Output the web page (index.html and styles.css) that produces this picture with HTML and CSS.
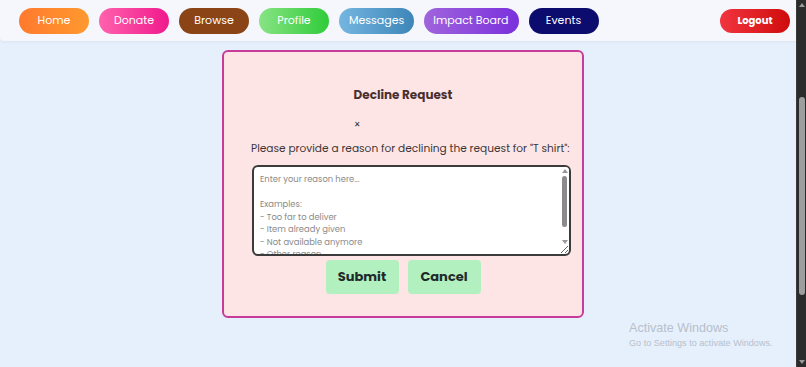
FILE: index.html
```html
<!DOCTYPE html>
<html lang="en">
<head>
<meta charset="utf-8">
<title>Decline Request</title>
<link rel="stylesheet" href="styles.css">
</head>
<body>
<div class="screen">
  <div class="page">
    <nav class="navbar">
      <div class="nav-links">
        <a class="nav-btn home">Home</a>
        <a class="nav-btn donate">Donate</a>
        <a class="nav-btn browse">Browse</a>
        <a class="nav-btn profile">Profile</a>
        <a class="nav-btn messages">Messages</a>
        <a class="nav-btn impact">Impact Board</a>
        <a class="nav-btn events">Events</a>
      </div>
      <a class="logout-btn">Logout</a>
    </nav>
    <main class="content">
      <section class="modal">
        <h3 class="modal-title">Decline Request</h3>
        <div class="close-row"><span class="close-btn">×</span></div>
        <p class="modal-text">Please provide a reason for declining the request for "T shirt":</p>
        <div class="reason-wrap">
          <textarea class="reason">Enter your reason here...

Examples:
- Too far to deliver
- Item already given
- Not available anymore
- Other reason</textarea>
          <div class="ta-scroll" aria-hidden="true">
            <span class="ta-arrow ta-up"></span>
            <div class="ta-track"><div class="ta-thumb"></div></div>
            <span class="ta-arrow ta-down"></span>
          </div>
        </div>
        <div class="actions">
          <button class="act-btn">Submit</button>
          <button class="act-btn">Cancel</button>
        </div>
      </section>
    </main>
    <div class="watermark">
      <div class="wm-title">Activate Windows</div>
      <div class="wm-sub">Go to Settings to activate Windows.</div>
    </div>
  </div>
  <div class="scrollbar">
    <span class="arrow up"></span>
    <div class="track"><div class="thumb"></div></div>
    <span class="arrow down"></span>
  </div>
</div>
</body>
</html>
```
FILE: styles.css
```css
* { box-sizing: border-box; }
html, body { margin: 0; padding: 0; height: 100%; overflow: hidden; }
body {
  font-family: "Poppins", "Inter", "Noto Sans", sans-serif;
  background: #e6f0fd;
}
.screen { display: flex; height: 367px; }
.page { flex: 1; position: relative; display: flex; flex-direction: column; }

.navbar {
  height: 41px;
  background: #f5f7fc;
  border-bottom-left-radius: 4px;
  box-shadow: 0 1px 3px rgba(0,0,0,0.05);
  display: flex;
  align-items: center;
  justify-content: space-between;
  padding: 0 6px 0 19px;
}
.nav-links { display: flex; gap: 10px; }
.nav-btn {
  height: 26px;
  min-width: 70px;
  padding: 0 10px;
  border-radius: 13px;
  color: #fff;
  font-size: 11px;
  display: flex;
  align-items: center;
  justify-content: center;
  white-space: nowrap;
}
.home { background: linear-gradient(90deg, #ff7a2e, #ff992e); }
.donate { background: linear-gradient(90deg, #ff62ad, #f0198c); }
.browse { background: #8b4415; }
.profile { background: linear-gradient(90deg, #88e384, #2fcc3a); }
.messages { background: linear-gradient(90deg, #74b6e0, #3d86b8); min-width: 74px; }
.impact { background: linear-gradient(90deg, #a064dc, #7a30dc); padding: 0 10px 0 9px; }
.events { background: #0c0b6e; }
.logout-btn {
  height: 24px;
  width: 70px;
  border-radius: 12px;
  background: linear-gradient(90deg, #f1353f, #cf0c0c);
  color: #fff;
  font-weight: 700;
  font-size: 10px;
  display: flex;
  align-items: center;
  justify-content: center;
  margin-top: 1px;
}

.content { padding-top: 9px; padding-left: 222px; }
.modal {
  width: 362px;
  height: 268px;
  background: #fde5e6;
  border: 2px solid #c93b9b;
  border-radius: 6px;
  padding: 34px 11px 0 28px;
  display: flex;
  flex-direction: column;
}
.modal-title {
  margin: 0 0 0 -17px;
  text-align: center;
  font-size: 12px;
  line-height: 17px;
  font-weight: 700;
  color: #4a2f2f;
}
.close-row { margin-top: 14px; padding-left: 102px; height: 12px; line-height: 12px; }
.close-btn { font-size: 10px; color: #333; }
.modal-text {
  margin: 13px 0 0 -1px;
  font-size: 10.6px;
  line-height: 14px;
  color: #3e3535;
  white-space: nowrap;
}
.reason-wrap { position: relative; margin-top: 9px; width: 319px; height: 91px; }
.reason {
  display: block;
  width: 319px;
  height: 91px;
  border: 2px solid #3b3b3b;
  border-radius: 6px;
  padding: 6px 12px 6px 6px;
  font-family: inherit;
  font-size: 8.4px;
  line-height: 12.5px;
  color: #8a8a8a;
  resize: vertical;
  background: #fff;
  overflow: hidden;
}
.ta-scroll {
  position: absolute;
  top: 2px;
  right: 2px;
  bottom: 12px;
  width: 9px;
  background: #fff;
  display: flex;
  flex-direction: column;
  align-items: center;
  border-top-right-radius: 4px;
}
.ta-arrow { width: 0; height: 0; border-left: 3px solid transparent; border-right: 3px solid transparent; }
.ta-up { border-bottom: 4px solid #979797; margin-top: 2px; }
.ta-down { border-top: 4px solid #979797; margin-bottom: 0; }
.ta-track { flex: 1; width: 100%; display: flex; justify-content: center; padding-top: 3px; }
.ta-thumb { width: 5px; height: 51px; background: #8b8b8b; border-radius: 3px; }

.actions { display: flex; justify-content: center; gap: 9px; margin: 4px 0 0 -17px; }
.act-btn {
  height: 34px;
  width: 73px;
  border: none;
  border-radius: 4px;
  background: #b3f0bf;
  color: #1f2b2b;
  font-family: inherit;
  font-weight: 700;
  font-size: 13px;
  padding: 0;
}

.watermark {
  position: absolute;
  left: 629px;
  top: 321px;
  font-family: "Liberation Sans", "Open Sans", sans-serif;
  color: #b6bfcb;
}
.wm-title { font-size: 12.6px; line-height: 15px; }
.wm-sub { font-size: 9.1px; line-height: 14px; }

.scrollbar {
  width: 10px;
  background: #2b2b2b;
  border-left: 1px solid #3a3a3a;
  display: flex;
  flex-direction: column;
  align-items: center;
}
.arrow { width: 0; height: 0; border-left: 3px solid transparent; border-right: 3px solid transparent; margin: 3px 0; }
.arrow.up { border-bottom: 4px solid #9a9a9a; }
.arrow.down { border-top: 4px solid #9a9a9a; }
.track { flex: 1; width: 100%; display: flex; justify-content: center; padding-top: 87px; }
.thumb { width: 6px; height: 198px; background: #9e9e9e; border-radius: 3px; }
```
